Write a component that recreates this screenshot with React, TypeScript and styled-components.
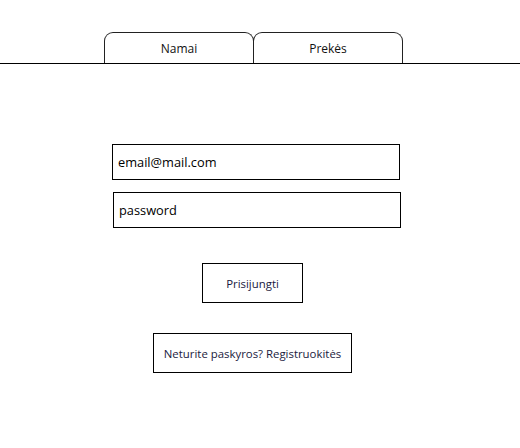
import React from 'react';
import styled, { createGlobalStyle } from 'styled-components';

const GlobalStyle = createGlobalStyle`
  html, body {
    margin: 0;
    padding: 0;
    background: #ffffff;
  }
  body {
    font-family: 'Open Sans', 'Noto Sans', sans-serif;
    color: #000000;
  }
`;

const Page = styled.div`
  width: 520px;
  height: 448px;
  display: flex;
  flex-direction: column;
`;

const NavBar = styled.nav`
  display: flex;
  padding: 32px 0 0 104px;
  border-bottom: 1px solid #000000;
`;

const Tab = styled.div`
  box-sizing: border-box;
  width: 150px;
  height: 31px;
  display: flex;
  align-items: center;
  justify-content: center;
  border: 1px solid #222222;
  border-bottom: none;
  border-radius: 9px 9px 0 0;
  font-size: 12px;
  color: #111111;
  margin-right: -1px;
`;

const Form = styled.form`
  display: flex;
  flex-direction: column;
  align-items: flex-start;
  padding-left: 112px;
  padding-top: 80px;
`;

const Field = styled.input<{ $shift?: number; $gap?: number }>`
  box-sizing: border-box;
  width: 288px;
  height: 36px;
  margin: ${({ $gap }) => $gap ?? 0}px 0 0 ${({ $shift }) => $shift ?? 0}px;
  padding: 0 5px;
  border: 1px solid #000000;
  border-radius: 0;
  outline: none;
  font-family: 'Open Sans', 'Noto Sans', sans-serif;
  font-size: 12.8px;
  color: #000000;
  background: #ffffff;

  &::placeholder {
    color: #000000;
  }
`;

const Button = styled.button<{ $shift: number; $width: number; $gap: number }>`
  box-sizing: border-box;
  width: ${({ $width }) => $width}px;
  height: 40px;
  margin: ${({ $gap }) => $gap}px 0 0 ${({ $shift }) => $shift}px;
  border: 1px solid #000000;
  border-radius: 0;
  background: #ffffff;
  font-family: 'Open Sans', 'Noto Sans', sans-serif;
  font-size: 11.4px;
  color: #1a1a40;
  padding: 0;
`;

export default function App() {
  return (
    <Page>
      <GlobalStyle />
      <NavBar>
        <Tab>Namai</Tab>
        <Tab>Prekės</Tab>
      </NavBar>
      <Form onSubmit={(e) => e.preventDefault()}>
        <Field type='text' defaultValue='email@mail.com' />
        <Field type='text' defaultValue='password' $shift={1} $gap={12} />
        <Button type='button' $shift={90} $width={101} $gap={35}>
          Prisijungti
        </Button>
        <Button type='button' $shift={41} $width={199} $gap={30}>
          Neturite paskyros? Registruokitės
        </Button>
      </Form>
    </Page>
  );
}
